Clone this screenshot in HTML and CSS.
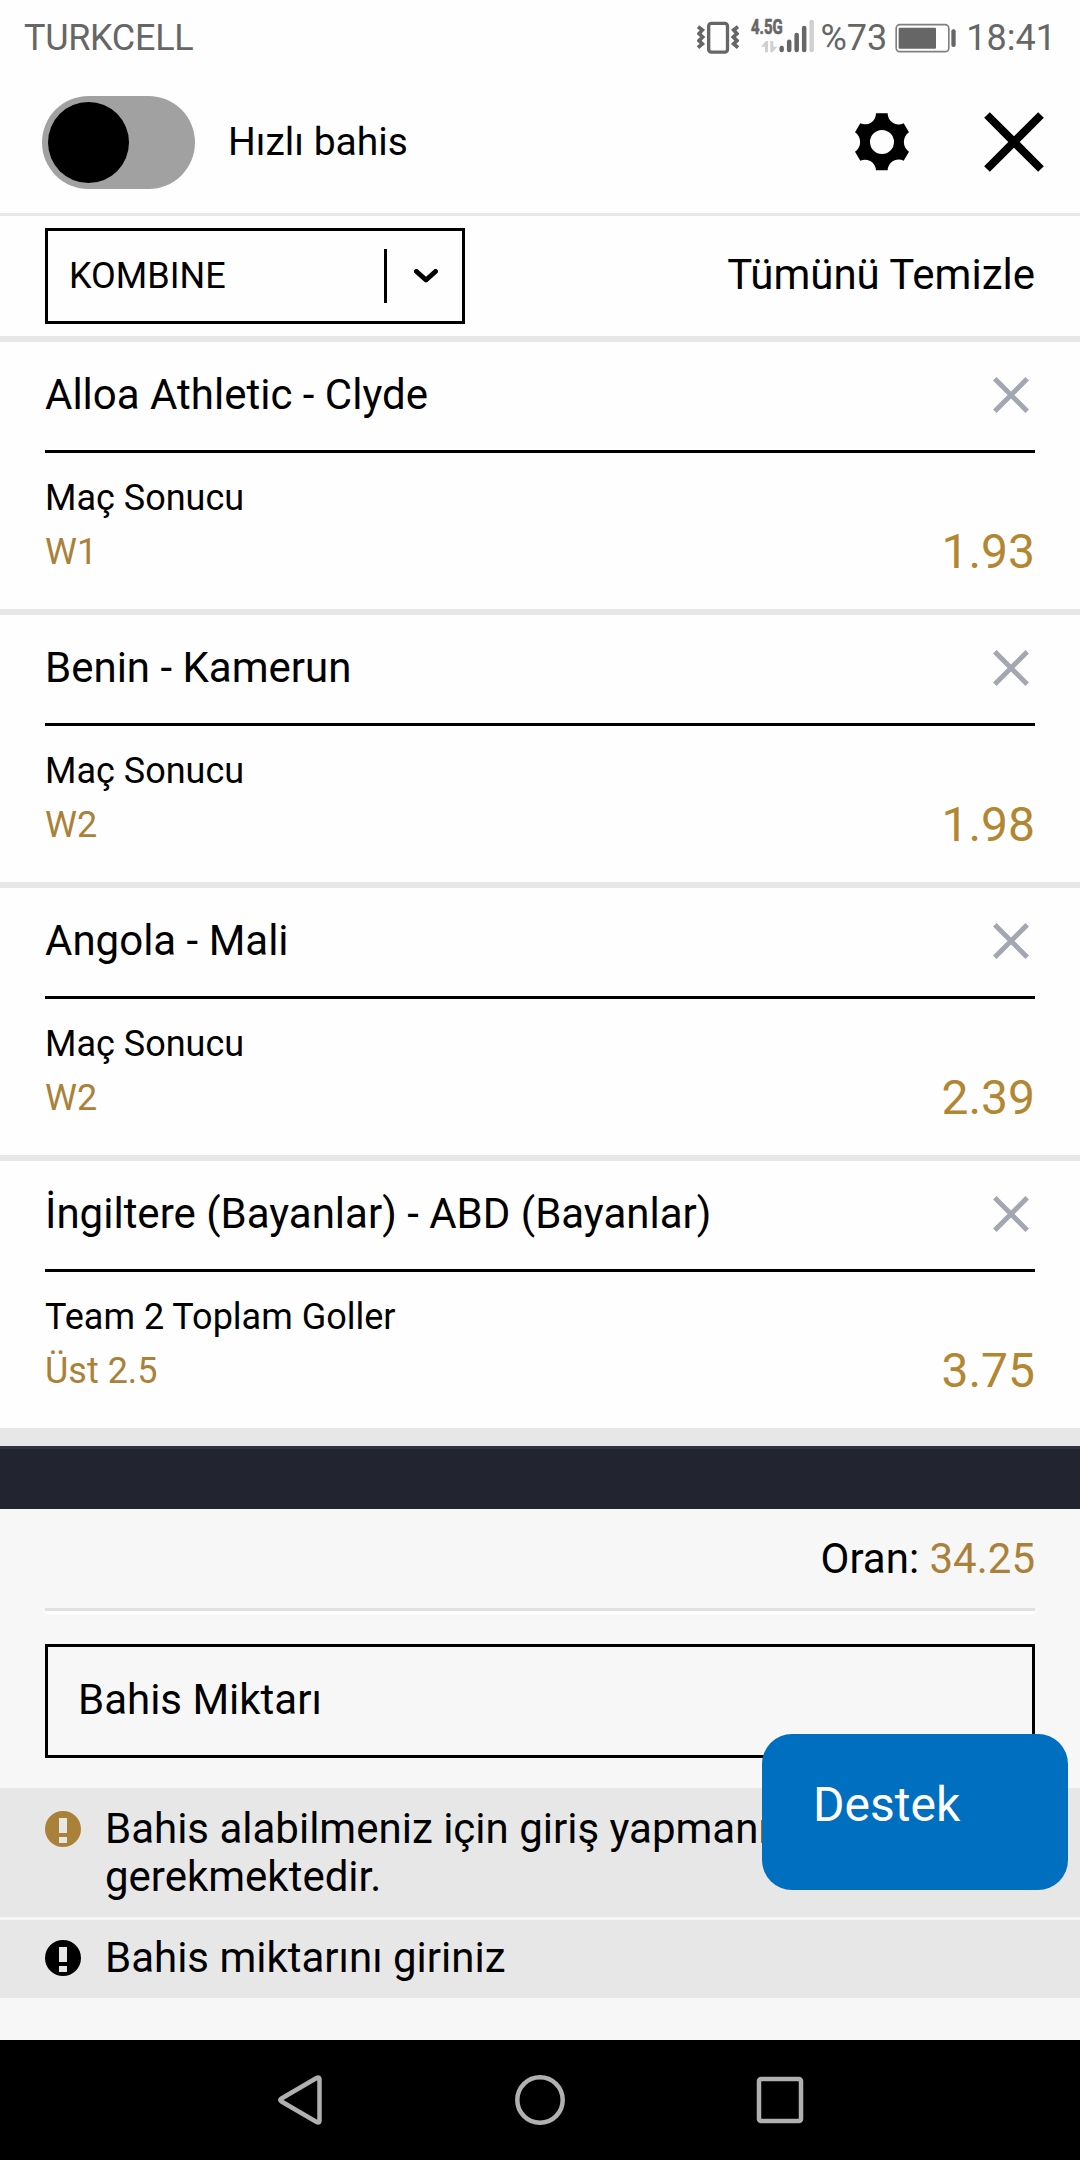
FILE: index.html
```html
<!DOCTYPE html>
<html lang="tr">
<head>
<meta charset="utf-8">
<title>Bahis Kuponu</title>
<link rel="stylesheet" href="styles.css">
</head>
<body>
<svg class="defs" aria-hidden="true">
  <symbol id="cross" viewBox="0 0 36 36"><path d="M1.8 1.8L34.2 34.2M34.2 1.8L1.8 34.2" stroke="currentColor" stroke-width="5"/></symbol>
  <symbol id="alert" viewBox="0 0 36 36"><path fill="currentColor" fill-rule="evenodd" d="M18 0a18 18 0 1 1 0 36a18 18 0 1 1 0-36zM14 7v15h8V7zM14 26v6h8v-6z"/></symbol>
</svg>
<div class="screen">
  <div class="status">
    <span class="carrier">TURKCELL</span>
    <svg class="vibrate" viewBox="0 0 126 102" fill="none" stroke="#666">
      <rect x="35" y="7" width="56.500" height="86.500" rx="8" stroke-width="10"/>
      <path d="M3 17L16 27L6 38L17 48L6 59L16 69L3 80M123 17L110 27L120 38L109 48L120 59L110 69L123 80" stroke-width="11"/>
    </svg>
    <svg class="signal" viewBox="0 0 192 102">
      <text class="network" x="0" y="46" textLength="95" lengthAdjust="spacingAndGlyphs">4.5G</text>
      <path fill="#d0d0d0" d="M30 83L45 66H51V100H42V83zM58 66H67V83H79L64 100H58z"/>
      <path stroke="#666" stroke-width="13.500" stroke-linecap="round" d="M92 87V93M114.500 68V93M137 48V93M159.500 27V93"/>
      <path stroke="#d0d0d0" stroke-width="13.500" stroke-linecap="round" d="M182 9V93"/>
    </svg>
    <span class="percent">%73</span>
    <svg class="battery" viewBox="0 0 186 90">
      <rect x="3.500" y="5" width="158" height="81" rx="11" fill="none" stroke="#808080" stroke-width="5"/>
      <rect x="11" y="14" width="112" height="63" rx="3" fill="#666"/>
      <rect x="169" y="19" width="13" height="53" rx="6" fill="#666"/>
    </svg>
    <span class="clock">18:41</span>
  </div>

  <header class="header">
    <span class="toggle"><span class="knob"></span></span>
    <span class="quick">Hızlı bahis</span>
    <svg class="gear" viewBox="516 335 180 180"><path fill-rule="evenodd" d="M588 339H623A33 33 0 0 0 671 369L687 396A35 35 0 0 0 687 454L671 481A33 33 0 0 0 623 510H588A33 33 0 0 0 541 481L525 454A35 35 0 0 0 525 396L541 369A33 33 0 0 0 588 339zM606 389a36 36 0 1 0 0 72a36 36 0 1 0 0-72z"/></svg>
    <svg class="close" viewBox="0 0 60 60"><path d="M3 3L57 57M57 3L3 57" stroke="#000" stroke-width="8"/></svg>
  </header>

  <div class="toolbar">
    <div class="select">
      <span class="select-value">KOMBINE</span>
      <span class="select-line"></span>
      <svg class="chevron" viewBox="0 0 24 14"><path d="M2.500 2.500L12 11L21.500 2.500" fill="none" stroke="#000" stroke-width="5" stroke-linecap="round" stroke-linejoin="round"/></svg>
    </div>
    <span class="clear">Tümünü Temizle</span>
  </div>

  <main class="bets">
    <article class="bet">
      <div class="bet-head"><span class="match">Alloa Athletic - Clyde</span><svg class="remove"><use href="#cross"/></svg></div>
      <div class="bet-body"><div><div>Maç Sonucu</div><div class="pick">W1</div></div><span class="odds">1.93</span></div>
    </article>
    <article class="bet">
      <div class="bet-head"><span class="match">Benin - Kamerun</span><svg class="remove"><use href="#cross"/></svg></div>
      <div class="bet-body"><div><div>Maç Sonucu</div><div class="pick">W2</div></div><span class="odds">1.98</span></div>
    </article>
    <article class="bet">
      <div class="bet-head"><span class="match">Angola - Mali</span><svg class="remove"><use href="#cross"/></svg></div>
      <div class="bet-body"><div><div>Maç Sonucu</div><div class="pick">W2</div></div><span class="odds">2.39</span></div>
    </article>
    <article class="bet">
      <div class="bet-head"><span class="match">İngiltere (Bayanlar) - ABD (Bayanlar)</span><svg class="remove"><use href="#cross"/></svg></div>
      <div class="bet-body"><div><div>Team 2 Toplam Goller</div><div class="pick">Üst 2.5</div></div><span class="odds">3.75</span></div>
    </article>
  </main>

  <div class="band"></div>

  <section class="summary">
    <div class="total">Oran: <span class="pick">34.25</span></div>
    <div class="amount">Bahis Miktarı</div>
  </section>
  <section class="notices">
    <div class="notice"><svg class="alert gold"><use href="#alert"/></svg><span>Bahis alabilmeniz için giriş yapmanız gerekmektedir.</span></div>
    <div class="notice"><svg class="alert"><use href="#alert"/></svg><span>Bahis miktarını giriniz</span></div>
    <div class="support">Destek</div>
  </section>

  <nav class="nav">
    <svg viewBox="0 0 50 50"><path d="M42 2.800L6.500 23.500Q4 25 6.500 26.500L42 47.200Q44.500 48.200 44.500 45.700V4.300Q44.500 1.800 42 2.800z"/></svg>
    <svg viewBox="0 0 50 50"><circle cx="25" cy="25" r="22.700"/></svg>
    <svg viewBox="0 0 50 50"><rect x="4" y="4" width="42" height="42" rx="2"/></svg>
  </nav>
</div>
</body>
</html>
```
FILE: styles.css
```css
* { box-sizing: border-box; }
body { margin: 0; background: #fff; font-family: Roboto, sans-serif; color: #000; }
svg { display: block; flex: none; }
.defs { position: absolute; width: 0; height: 0; }
.screen { width: 1080px; height: 2160px; display: flex; flex-direction: column; overflow: hidden; background: #fefefe; }

.status { height: 72px; padding: 3px 24px 0 24px; display: flex; align-items: center; font-size: 36px; color: #666; }
.carrier { margin-right: auto; letter-spacing: -0.3px; }
.vibrate { width: 42px; height: 34px; margin: 0 12px 0 0; }
.signal { width: 64px; height: 34px; overflow: visible; margin-top: -3px; }
.network { font: bold 62px Roboto, sans-serif; fill: #666; stroke: #666; stroke-width: 2px; }
.percent { margin-left: 6px; }
.battery { width: 62px; height: 30px; margin: 0 9px 0 8px; }

.header { height: 144px; padding: 0 36px 0 42px; display: flex; align-items: center; border-bottom: 3px solid #e7e7e7; }
.toggle { width: 153px; height: 93px; padding: 6px; border-radius: 47px; background: #a1a1a1; }
.knob { display: block; width: 81px; height: 81px; border-radius: 50%; background: #000; }
.quick { margin: -1px auto 0 33px; font-size: 39px; }
.gear { width: 60px; height: 60px; margin: -2px 72px 0 0; }
.close { width: 60px; height: 60px; margin-top: -1px; }

.toolbar { height: 126px; padding: 0 45px; display: flex; align-items: center; justify-content: space-between; border-bottom: 6px solid #e7e7e7; }
.select { width: 420px; height: 96px; padding: 0 24px 0 21px; border: 3px solid #000; display: flex; align-items: center; font-size: 36px; }
.select-value { margin-right: auto; }
.select-line { width: 3px; height: 54px; margin-right: 27px; background: #000; }
.chevron { width: 24px; height: 14px; }
.clear { font-size: 42px; margin-top: -3px; }

.bet { height: 273px; padding: 0 45px; border-bottom: 6px solid #e7e7e7; }
.bet:last-child { height: 285px; border-bottom-width: 18px; }
.bet-head { height: 111px; padding: 0 6px 2px 0; display: flex; align-items: center; justify-content: space-between; border-bottom: 3px solid #000; font-size: 42px; }
.match { margin-top: -2px; }
.remove { width: 36px; height: 36px; color: #a3a7b1; }
.bet-body { padding-top: 18px; display: flex; align-items: flex-end; justify-content: space-between; font-size: 36px; line-height: 54px; }
.pick { color: #aa8138; }
.odds { font-size: 48px; color: #b38732; }

.band { height: 63px; background: #222530; border-top: 3px solid #2f323f; }
.summary { height: 279px; padding: 0 45px; background: #f7f7f7; }
.total { height: 102px; padding-top: 25px; text-align: right; font-size: 42px; line-height: 49px; border-bottom: 3px solid #e1e1e1; box-shadow: 0 3px #fff; }
.amount { height: 114px; margin-top: 33px; padding: 0 30px 4px; border: 3px solid #000; display: flex; align-items: center; font-size: 42px; }

.notices { position: relative; height: 252px; display: flex; flex-direction: column; gap: 3px; background: #f7f7f7; }
.notice { padding: 17px 45px 16px; display: flex; gap: 24px; background: #e7e7e7; font-size: 42px; line-height: 48px; }
.notice + .notice { padding: 14px 45px 16px; }
.alert { width: 36px; height: 36px; margin-top: 6px; }
.gold { color: #aa8138; }
.support { position: absolute; left: 762px; top: -54px; width: 306px; height: 156px; padding: 0 51px 15px; border-radius: 30px; display: flex; align-items: center; background: #006fbf; color: #fff; font-size: 48px; }

.nav { height: 120px; display: flex; align-items: center; justify-content: center; gap: 190px; background: #000; }
.nav svg { width: 50px; height: 50px; fill: none; stroke: #b0b0b0; stroke-width: 4.500px; }
```
